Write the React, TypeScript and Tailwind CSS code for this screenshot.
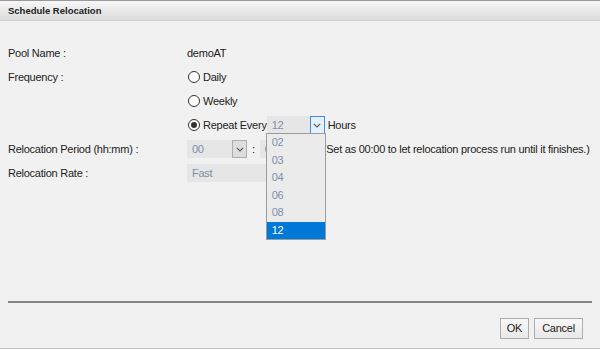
import React from "react";

const Chevron = () => (
    <svg width="8" height="5" viewBox="0 0 8 5" fill="none">
        <path d="M0.8 0.8 L4 4 L7.2 0.8" stroke="#555" strokeWidth="1.1" />
    </svg>
);

const Radio = ({ checked, label }: { checked?: boolean; label: string }) => (
    <label className="flex items-center gap-[3px]">
        <span className="flex h-[12px] w-[12px] items-center justify-center rounded-full border border-[#333] bg-white">
            {checked && <span className="h-[6px] w-[6px] rounded-full bg-[#333]" />}
        </span>
        <span>{label}</span>
    </label>
);

function Select({ value, focused, width = 60 }: { value: string; focused?: boolean; width?: number }) {
    return (
        <div className="flex h-[18px] shrink-0 items-stretch bg-[#e6e6e6]" style={{ width }}>
            <span className="flex-1 pl-[5px] leading-[18px] text-[#7b8fac]">{value}</span>
            <span
                className={`flex w-[15px] items-center justify-center border ${focused ? "border-[#3d8ee0] bg-[#e4f0fb]" : "border-[#adadad] bg-[#dedede]"
                    }`}
            >
                <Chevron />
            </span>
        </div>
    );
}

const hours = ["02", "03", "04", "06", "08", "12"];

export default function App() {
    return (
        <div
            className="flex h-[349px] w-[600px] flex-col bg-[#f1f1f1] text-[11px] tracking-[-0.25px] text-[#222]"
            style={{ fontFamily: "'Liberation Sans', Arial, sans-serif" }}
        >
            <header className="h-[21px] border-t border-b border-t-[#999] border-b-[#cfcfcf] bg-gradient-to-b from-[#f7f7f7] to-[#dcdcdc] pl-[8px] text-[9.5px] font-bold leading-[19px] tracking-normal">
                Schedule Relocation
            </header>

            <div className="pt-[20px] pl-[8px]">
                <div className="flex h-[24px] items-center">
                    <div className="w-[179px] shrink-0">Pool Name :</div>
                    <div>demoAT</div>
                </div>
                <div className="flex h-[24px] items-center">
                    <div className="w-[180px] shrink-0">Frequency :</div>
                    <Radio label="Daily" />
                </div>
                <div className="flex h-[24px] items-center">
                    <div className="w-[180px] shrink-0" />
                    <Radio label="Weekly" />
                </div>
                <div className="flex h-[24px] items-center">
                    <div className="w-[180px] shrink-0" />
                    <Radio checked label="Repeat Every" />
                    <div className="relative">
                        <Select value="12" focused width={58} />
                        <ul className="absolute left-[-1px] top-[17px] z-10 w-[60px] border border-[#9c9c9c] bg-[#ebebeb] text-[#7b8fac]">
                            {hours.map((h) => (
                                <li
                                    key={h}
                                    className={`h-[17.5px] pl-[5px] leading-[17.5px] ${h === "12" ? "bg-[#0078d7] text-white" : ""}`}
                                >
                                    {h}
                                </li>
                            ))}
                        </ul>
                    </div>
                    <span className="ml-[3px]">Hours</span>
                </div>
                <div className="flex h-[24px] items-center whitespace-nowrap">
                    <div className="w-[179px] shrink-0">Relocation Period (hh:mm) :</div>
                    <Select value="00" />
                    <span className="mx-[5px]">:</span>
                    <Select value="00" />
                    <span className="ml-[3px]">(Set as 00:00 to let relocation process run until it finishes.)</span>
                </div>
                <div className="flex h-[24px] items-center">
                    <div className="w-[179px] shrink-0">Relocation Rate :</div>
                    <div className="h-[18px] w-[130px] bg-[#e6e6e6] pl-[5px] leading-[18px] text-[#7b8fac]">Fast</div>
                </div>
            </div>

            <div className="flex-1" />

            <div className="mx-[8px] h-[2px] bg-[#858585]" />
            <div className="flex justify-end gap-[5px] pr-[17px] pt-[15px] pb-[9px]">
                <button className="h-[21px] w-[29px] border border-[#adadad] bg-gradient-to-b from-[#f8f8f8] to-[#e8e8e8]">
                    OK
                </button>
                <button className="h-[21px] w-[49px] border border-[#adadad] bg-gradient-to-b from-[#f8f8f8] to-[#e8e8e8]">
                    Cancel
                </button>
            </div>
            <div className="h-[1px] bg-[#c4c4c4]" />
        </div>
    );
}
